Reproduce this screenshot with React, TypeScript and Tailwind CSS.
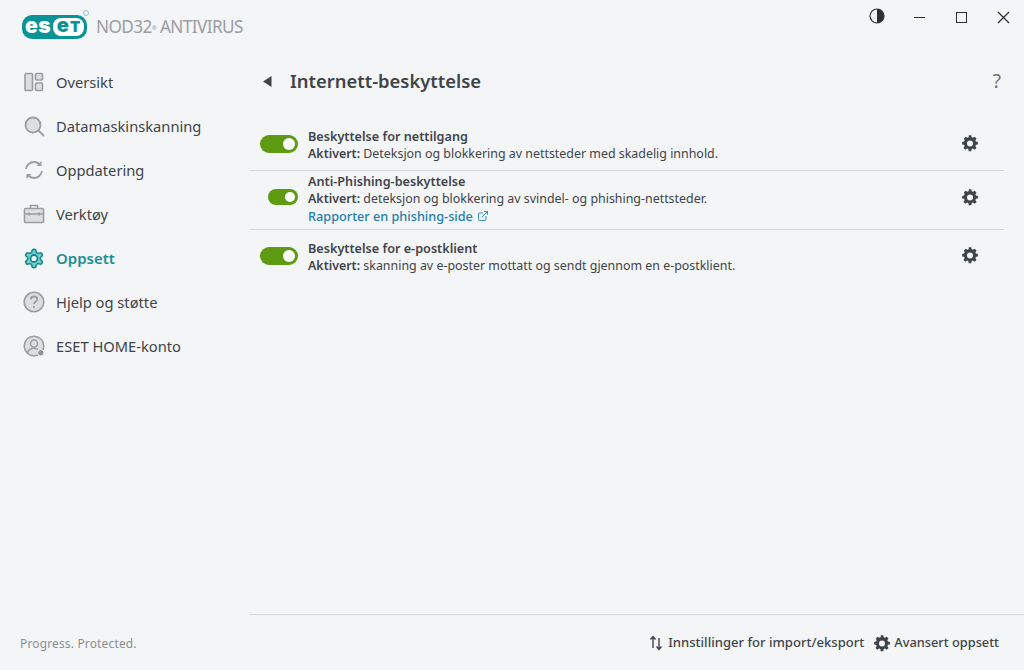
import React from "react";
import { ExternalLink } from "lucide-react";

const font = "font-['Noto_Sans',sans-serif]";

const GEAR =
  "M10.3 1.5h3.4l.5 2.8c.6.2 1.2.4 1.7.8l2.4-1.6 2.4 2.4-1.6 2.4c.3.5.6 1.1.8 1.7l2.6.5v3.4l-2.6.5c-.2.6-.5 1.2-.8 1.7l1.6 2.4-2.4 2.4-2.4-1.6c-.5.3-1.1.6-1.7.8l-.5 2.8h-3.4l-.5-2.8c-.6-.2-1.2-.5-1.7-.8l-2.4 1.6-2.4-2.4 1.6-2.4c-.3-.5-.6-1.1-.8-1.7l-2.6-.5v-3.4l2.6-.5c.2-.6.5-1.2.8-1.7L3.8 5.900l2.4-2.4 2.4 1.6c.5-.4 1.1-.6 1.7-.8z";

const ROUND_GEAR =
  "M12.22 2h-.44a2 2 0 0 0-2 2v.18a2 2 0 0 1-1 1.73l-.43.25a2 2 0 0 1-2 0l-.15-.08a2 2 0 0 0-2.73.73l-.22.38a2 2 0 0 0 .73 2.73l.15.1a2 2 0 0 1 1 1.72v.51a2 2 0 0 1-1 1.74l-.15.09a2 2 0 0 0-.73 2.73l.22.38a2 2 0 0 0 2.73.73l.15-.08a2 2 0 0 1 2 0l.43.25a2 2 0 0 1 1 1.73V20a2 2 0 0 0 2 2h.44a2 2 0 0 0 2-2v-.18a2 2 0 0 1 1-1.73l.43-.25a2 2 0 0 1 2 0l.15.08a2 2 0 0 0 2.73-.73l.22-.39a2 2 0 0 0-.73-2.73l-.15-.08a2 2 0 0 1-1-1.74v-.5a2 2 0 0 1 1-1.74l.15-.09a2 2 0 0 0 .73-2.73l-.22-.38a2 2 0 0 0-2.73-.73l-.15.08a2 2 0 0 1-2 0l-.43-.25a2 2 0 0 1-1-1.73V4a2 2 0 0 0-2-2z";

function Gear({ size = 18, color = "#3f4449" }: { size?: number; color?: string }) {
  return (
    <svg width={size} height={size} viewBox="0 0 24 24">
      <path d={GEAR} fill={color} />
      <circle cx="12" cy="12.500" r="4" fill="#f3f5f7" />
    </svg>
  );
}

function Logo() {
  return (
    <div className="relative flex items-center h-[24px] w-[65px] rounded-[10px] bg-[#0a9396] pl-[3px] font-['Inter',sans-serif] font-black leading-none">
      <span className="text-white text-[21px] tracking-[0.5px] -mt-[3px]">es</span>
      <span className="ml-[2px] flex items-center justify-center gap-[1px] h-[18px] w-[31px] rounded-[8px] bg-white text-[#0a9396]">
        <span className="text-[20px] -mt-[3px]">e</span>
        <span className="text-[15px]">T</span>
      </span>
      <span className="absolute -top-[5px] right-[-2px] w-[6px] h-[6px] rounded-full border border-[#8fc9ca]" />
    </div>
  );
}

const stroke = "#9a9ea3";
const fill = "#dcdee1";

const icons: Record<string, React.ReactNode> = {
  overview: (
    <svg width="22" height="22" viewBox="0 0 22 22" fill={fill} stroke={stroke} strokeWidth="1.6">
      <rect x="2" y="2.500" width="7.500" height="17" rx="1" />
      <rect x="12.500" y="2.500" width="7" height="6.500" rx="1" />
      <rect x="12.500" y="12" width="7" height="7.500" rx="1" />
    </svg>
  ),
  scan: (
    <svg width="22" height="22" viewBox="0 0 22 22" fill={fill} stroke={stroke} strokeWidth="1.8">
      <circle cx="10" cy="10" r="7.500" />
      <path d="M15.500 15.500l5 5" fill="none" strokeLinecap="round" />
    </svg>
  ),
  update: (
    <svg width="22" height="22" viewBox="0 0 22 22" fill="none" stroke={stroke} strokeWidth="1.8">
      <path d="M3 10c.5-4 4-7 8-7 2.400 0 4.500 1 6 2.800" />
      <path d="M19 12c-.5 4-4 7-8 7-2.400 0-4.500-1-6-2.800" />
      <path d="M18.500 2v5h-5" fill={stroke} stroke="none" />
      <path d="M3.500 20v-5h5" fill={stroke} stroke="none" />
    </svg>
  ),
  tools: (
    <svg width="22" height="22" viewBox="0 0 22 22" fill={fill} stroke={stroke} strokeWidth="1.6">
      <rect x="1.500" y="5.500" width="19" height="14" rx="1" />
      <path d="M7.500 5.500V2.500h7v3M1.500 11h19M6 9.500v3M16 9.500v3" fill="none" />
    </svg>
  ),
  setup: (
    <svg width="23" height="23" viewBox="0 0 24 24">
      <path d={ROUND_GEAR} fill="#7ccccd" stroke="#0f8a8d" strokeWidth="1.700" strokeLinejoin="round" />
      <circle cx="12" cy="12" r="3.800" fill="#f3f5f7" stroke="#0f8a8d" strokeWidth="2" />
    </svg>
  ),
  help: (
    <svg width="22" height="22" viewBox="0 0 22 22" fill={fill} stroke={stroke} strokeWidth="1.600">
      <circle cx="11" cy="11" r="9.800" />
      <path d="M7.800 8.500c0-1.900 1.400-3 3.200-3s3.200 1.100 3.200 2.800c0 2.400-3.200 2.400-3.200 4.700" fill="none" strokeWidth="1.800" />
      <circle cx="11" cy="16" r="1.100" fill={stroke} stroke="none" />
    </svg>
  ),
  account: (
    <svg width="22" height="22" viewBox="0 0 22 22" fill={fill} stroke={stroke} strokeWidth="1.500">
      <circle cx="11" cy="11" r="9.800" />
      <circle cx="11" cy="8.500" r="3.500" />
      <path d="M4.500 18c.8-3 3.400-4.800 6.500-4.800 1.500 0 2.800.4 3.900 1.100" />
      <circle cx="17.800" cy="17.800" r="3.200" fill="#8f9397" stroke="#f3f5f7" strokeWidth="1" />
    </svg>
  ),
};

const nav = [
  { id: "overview", label: "Oversikt" },
  { id: "scan", label: "Datamaskinskanning" },
  { id: "update", label: "Oppdatering" },
  { id: "tools", label: "Verktøy" },
  { id: "setup", label: "Oppsett", active: true },
  { id: "help", label: "Hjelp og støtte" },
  { id: "account", label: "ESET HOME-konto" },
];

function Toggle({ small }: { small?: boolean }) {
  return (
    <div className={small ? "flex items-center justify-end w-[30px] h-[16px] rounded-full bg-[#5e9a12] pr-[3px]" : "flex items-center justify-end w-[38px] h-[18px] rounded-full bg-[#5e9a12] pr-[3px]"}>
      <span className={small ? "w-[10px] h-[10px] rounded-full bg-white" : "w-[12px] h-[12px] rounded-full bg-white"} />
    </div>
  );
}

function Row({
  title,
  desc,
  link,
  small,
  className,
}: {
  title: string;
  desc: string;
  link?: string;
  small?: boolean;
  className: string;
}) {
  return (
    <div className={"flex items-start pr-[45px] " + className}>
      <div className={"w-[48px] flex justify-end " + (small ? "pt-[18px]" : "pt-[8px]")}>
        <Toggle small={small} />
      </div>
      <div className={"flex-1 ml-[10px] text-[12.42px] leading-[18px] text-[#3f4449] " + (small ? "pt-[1px]" : "")}>
        <div className="font-semibold text-[12.65px]">{title}</div>
        <div>
          <span className="font-semibold">Aktivert:</span> {desc}
        </div>
        {link && (
          <div className="flex items-center gap-[4px] -mt-[1px] text-[12.7px] text-[#1f7fae] font-medium">
            {link}
            <ExternalLink size={12} strokeWidth={1.8} />
          </div>
        )}
      </div>
      <div className={small ? "pt-[17px]" : "pt-[7px]"}>
        <Gear />
      </div>
    </div>
  );
}

export default function App() {
  return (
    <div className={"flex flex-col w-[1024px] h-[670px] overflow-hidden bg-[#f3f5f7] text-[#3f4449] " + font}>
      <div className="flex flex-1 min-h-0">
        <aside className="w-[250px] flex flex-col">
          <div className="flex items-center h-[60px] pl-[22px] pb-[7px]">
            <Logo />
            <span className="ml-[9px] text-[#9a9ea3] text-[17.2px] tracking-[-0.6px]">
              NOD32<sup className="text-[6px]">®</sup> ANTIVIRUS
            </span>
          </div>
          <nav className="flex flex-col">
            {nav.map((item) => (
              <div key={item.id} className="flex items-center h-[44px] pl-[23px]">
                <span className="w-[22px] flex justify-center">{icons[item.id]}</span>
                <span className={item.active ? "ml-[11px] pt-[1px] text-[15px] font-semibold text-[#1d8f92]" : "ml-[11px] pt-[1px] text-[14.7px] text-[#3f4449]"}>
                  {item.label}
                </span>
              </div>
            ))}
          </nav>
          <div className="mt-auto pl-[20px] pb-[17px] text-[11.9px] tracking-[0.2px] text-[#8b8f94]">Progress. Protected.</div>
        </aside>
        <main className="flex-1 flex flex-col min-w-0">
          <div className="relative h-[60px] flex-none">
            <div className="absolute right-[0px] top-0 flex items-center h-[34px]">
              <span className="w-[42px] flex justify-center -mt-[2px]">
                <svg width="16" height="16" viewBox="0 0 16 16">
                  <circle cx="8" cy="8" r="7" fill="none" stroke="#2b2f33" strokeWidth="1.200" />
                  <path d="M8 1a7 7 0 0 1 0 14z" fill="#2b2f33" />
                </svg>
              </span>
              <span className="w-[42px] flex justify-center">
                <span className="w-[11px] h-[1px] bg-[#2b2f33]" />
              </span>
              <span className="w-[42px] flex justify-center">
                <span className="w-[11px] h-[11px] border border-[#2b2f33]" />
              </span>
              <span className="w-[42px] flex justify-center">
                <svg width="13" height="13" viewBox="0 0 13 13" stroke="#2b2f33" strokeWidth="1.300">
                  <path d="M1 1l11 11M12 1L1 12" />
                </svg>
              </span>
            </div>
          </div>
          <div className="flex items-center h-[42px] pl-[13px] pr-[23px]">
            <svg width="9" height="11" viewBox="0 0 9 11">
              <path d="M8.500 0v11L0 5.500z" fill="#3f4449" />
            </svg>
            <h1 className="ml-[18px] text-[18.4px] font-semibold text-[#3f4449]">Internett-beskyttelse</h1>
            <span className="ml-auto text-[19px] text-[#6d7176]">?</span>
          </div>
          <div className="flex flex-col mt-[24px]">
            <Row className="h-[44px] pt-[1px]" title="Beskyttelse for nettilgang" desc="Deteksjon og blokkering av nettsteder med skadelig innhold." />
            <div className="h-[1px] bg-[#d5d7da] mr-[20px]" />
            <Row className="h-[58px]" small title="Anti-Phishing-beskyttelse" desc="deteksjon og blokkering av svindel- og phishing-nettsteder." link="Rapporter en phishing-side" />
            <div className="h-[1px] bg-[#d5d7da] mr-[20px]" />
            <Row className="h-[44px] pt-[9px]" title="Beskyttelse for e-postklient" desc="skanning av e-poster mottatt og sendt gjennom en e-postklient." />
          </div>
          <div className="mt-auto h-[56px] border-t border-[#d5d7da] flex items-center justify-end pr-[25px] font-medium text-[#3f4449]">
            <svg width="14" height="16" viewBox="0 0 14 16" fill="none" stroke="#3f4449" strokeWidth="1.400">
              <path d="M4 13V2M1.500 4.500L4 1.500l2.500 3" />
              <path d="M10 3v11M7.500 11.500l2.500 3 2.500-3" />
            </svg>
            <span className="ml-[5px] text-[13.07px]">Innstillinger for import/eksport</span>
            <span className="ml-[9px] flex">
              <Gear size={18} />
            </span>
            <span className="ml-[3px] text-[12.8px]">Avansert oppsett</span>
          </div>
        </main>
      </div>
    </div>
  );
}
